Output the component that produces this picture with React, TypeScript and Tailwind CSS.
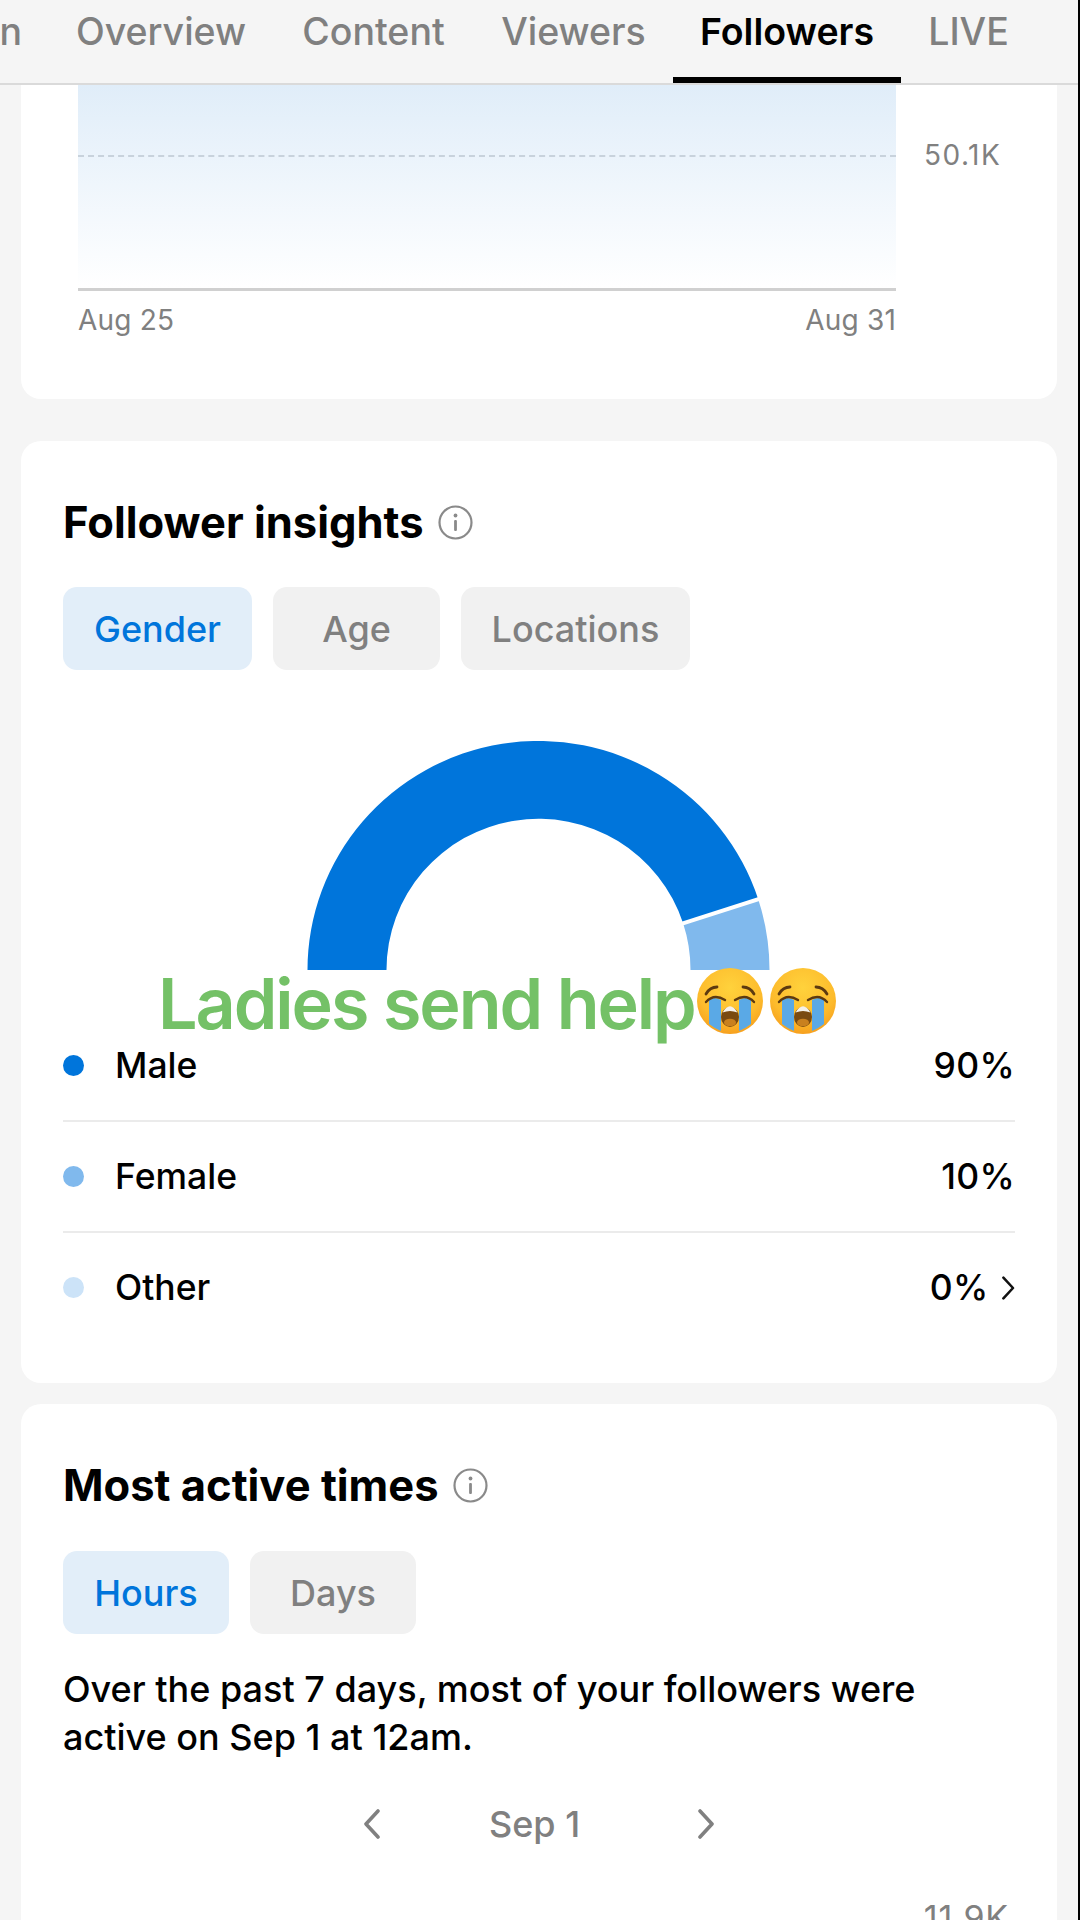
import React from "react";

const font = { fontFamily: '"Inter", "Liberation Sans", sans-serif' };

function InfoIcon() {
  return (
    <svg width="35" height="35" viewBox="0 0 35 35" fill="none" className="shrink-0">
      <circle cx="17.5" cy="17.5" r="16" stroke="#8a8a8a" strokeWidth="2.2" />
      <circle cx="17.5" cy="10.5" r="1.9" fill="#8a8a8a" />
      <rect x="16.1" y="15" width="2.8" height="11" rx="1" fill="#8a8a8a" />
    </svg>
  );
}

function Chevron({ dir, size = 30, color = "#808080", sw = 3.6 }: { dir: "left" | "right"; size?: number; color?: string; sw?: number }) {
  return (
    <svg width={size * 0.6} height={size} viewBox="0 0 18 30" fill="none" className="shrink-0">
      <path
        d={dir === "left" ? "M15 2 L3 15 L15 28" : "M3 2 L15 15 L3 28"}
        stroke={color}
        strokeWidth={sw}
        strokeLinecap="round"
        strokeLinejoin="round"
      />
    </svg>
  );
}

function CryEmoji({ id }: { id: string }) {
  return (
    <svg width="66" height="66" viewBox="0 0 66 66" className="shrink-0" role="img" aria-label="😭">
      <defs>
        <radialGradient id={id} cx="50%" cy="30%" r="75%">
          <stop offset="0%" stopColor="#FFD23C" />
          <stop offset="65%" stopColor="#FDBB2C" />
          <stop offset="100%" stopColor="#F59A1B" />
        </radialGradient>
      </defs>
      <circle cx="33" cy="33" r="33" fill={`url(#${id})`} />
      <path d="M12 32 Q17 28 24 32 L24 63 Q17 60 12 56 Z" fill="#5AA9E6" />
      <path d="M54 32 Q49 28 42 32 L42 63 Q49 60 54 56 Z" fill="#5AA9E6" />
      <path d="M9 34 Q17 25 28 32" stroke="#5d3a10" strokeWidth="2.4" fill="none" strokeLinecap="round" />
      <path d="M57 34 Q49 25 38 32" stroke="#5d3a10" strokeWidth="2.4" fill="none" strokeLinecap="round" />
      <path d="M9 26 Q13 19 20 19" stroke="#5d3a10" strokeWidth="2.8" fill="none" strokeLinecap="round" />
      <path d="M57 26 Q53 19 46 19" stroke="#5d3a10" strokeWidth="2.8" fill="none" strokeLinecap="round" />
      <ellipse cx="33" cy="49" rx="9" ry="10" fill="#7a4a10" />
      <path d="M25.5 44.5 Q33 32 40.5 44.5 Q33 41.5 25.5 44.5 Z" fill="#f4f1ea" />
      <ellipse cx="33" cy="54.5" rx="6" ry="3.8" fill="#C9801E" />
    </svg>
  );
}

function Pill({ label, active, w }: { label: string; active?: boolean; w: string }) {
  return (
    <div
      className={`${w} h-[83px] rounded-[14px] flex items-center justify-center text-[36px] font-medium ${
        active ? "bg-[#E2EEF9] text-[#0075DB]" : "bg-[#F1F1F1] text-[#808080]"
      }`}
    >
      {label}
    </div>
  );
}

function LegendRow({ color, label, value, chevron, border }: { color: string; label: string; value: string; chevron?: boolean; border?: boolean }) {
  return (
    <div className={`h-[109px] flex items-center box-content ${border ? "border-b-2 border-[#EBEBEB]" : ""}`}>
      <span className={`w-[21px] h-[21px] rounded-full ${color}`} />
      <span className="ml-[31px] text-[35.5px] font-medium text-black">{label}</span>
      <span className="ml-auto flex items-center text-[35.5px] font-medium text-black tracking-[0.3px]">
        {value}
        {chevron && (
          <span className="ml-[12px] flex">
            <Chevron dir="right" size={24} color="#111" sw={3.2} />
          </span>
        )}
      </span>
    </div>
  );
}

export default function App() {
  return (
    <div style={font} className="w-[1080px] h-[1920px] overflow-hidden bg-[#F5F5F5] border-r-2 border-black box-border">
      {/* Tabs */}
      <div className="h-[85px] border-b-2 border-[#DADADA] box-border flex text-[37.5px] font-medium text-[#808080]">
        <div className="w-[49px] overflow-hidden flex justify-end pr-[27px] pt-[9px] leading-[46px]">n</div>
        {[
          ["Overview", "w-[224px]"],
          ["Content", "w-[201px]"],
          ["Viewers", "w-[199px]"],
        ].map(([t, w]) => (
          <div key={t} className={`${w} flex justify-center pt-[9px] leading-[46px]`}>
            {t}
          </div>
        ))}
        <div className="w-[228px] h-[83px] box-border border-b-[6px] border-black flex justify-center pt-[9px] leading-[46px] font-semibold text-black">
          Followers
        </div>
        <div className="w-[135px] flex justify-center pt-[9px] leading-[46px]">LIVE</div>
      </div>

      {/* Chart card */}
      <div className="mx-[21px] h-[314px] bg-white rounded-b-[20px] pl-[57px]">
        <div className="flex">
          <div className="relative w-[818px] h-[203px] bg-gradient-to-b from-[#E0EDF9] to-[#FFFFFF] border-b-[3px] border-[#D0D0D0] box-content">
            <div className="absolute left-0 right-0 top-[70px] border-t-2 border-dashed border-[#C8D2DC]" />
          </div>
          <div className="ml-[28px] mt-[52px] text-[28px] leading-[36px] tracking-[1.5px] text-[#808080]">50.1K</div>
        </div>
        <div className="w-[818px] flex justify-between mt-[11px] text-[28px] leading-[36px] tracking-[0.2px] text-[#808080]">
          <span>Aug 25</span>
          <span>Aug 31</span>
        </div>
      </div>

      {/* Follower insights */}
      <div className="mx-[21px] mt-[42px] h-[942px] bg-white rounded-[20px] px-[42px] pt-[57px]">
        <div className="flex items-center gap-[14px] h-[48px]">
          <h2 className="text-[43.5px] font-bold text-black leading-[48px]">Follower insights</h2>
          <InfoIcon />
        </div>
        <div className="flex gap-[21px] mt-[41px]">
          <Pill label="Gender" active w="w-[189px]" />
          <Pill label="Age" w="w-[167px]" />
          <Pill label="Locations" w="w-[229px]" />
        </div>
        <div className="relative mt-[71px] h-[229px]">
          <svg width="463" height="229" viewBox="0 0 463 229" className="absolute left-[244px] top-0">
            <path d="M0.5 229 A231 229 0 0 1 451.2 158.2 L376.1 182.3 A152 151 0 0 0 79.5 229 Z" fill="#0075DB" />
            <path d="M451.2 158.2 A231 229 0 0 1 462.5 229 L383.5 229 A152 151 0 0 0 376.1 182.3 Z" fill="#80B9ED" />
            <path d="M372 183.7 L458 156" stroke="#fff" strokeWidth="4" />
          </svg>
          <div className="absolute left-[95px] top-[225px] flex items-start whitespace-nowrap">
            <span className="text-[70px] font-semibold leading-[76px] text-[#74C167] tracking-[-2.05px]">Ladies send help</span>
            <span className="absolute left-[539px] top-[2px] flex gap-[7px]">
              <CryEmoji id="e1" />
              <CryEmoji id="e2" />
            </span>
          </div>
        </div>
        <div className="mt-[41px]">
          <LegendRow color="bg-[#0075DB]" label="Male" value="90%" border />
          <LegendRow color="bg-[#80B9ED]" label="Female" value="10%" border />
          <LegendRow color="bg-[#CCE3F8]" label="Other" value="0%" chevron />
        </div>
      </div>

      {/* Most active */}
      <div className="mx-[21px] mt-[21px] h-[600px] bg-white rounded-[20px] px-[42px] pt-[57px]">
        <div className="flex items-center gap-[14px] h-[48px]">
          <h2 className="text-[43.5px] font-bold text-black leading-[48px]">Most active times</h2>
          <InfoIcon />
        </div>
        <div className="flex gap-[21px] mt-[42px]">
          <Pill label="Hours" active w="w-[166px]" />
          <Pill label="Days" w="w-[166px]" />
        </div>
        <p className="mt-[31px] text-[36px] font-medium leading-[48px] text-black">
          Over the past 7 days, most of your followers were
          <br />
          active on Sep 1 at 12am.
        </p>
        <div className="mt-[39px] h-[48px] flex items-center justify-center text-[36px] font-medium text-[#808080]">
          <Chevron dir="left" size={30} />
          <span className="ml-[108px] mr-[117px]">Sep 1</span>
          <Chevron dir="right" size={30} />
        </div>
        <div className="mt-[52px] text-right pr-[6px] text-[34px] leading-[36px] tracking-[0.8px] text-[#808080]">11.9K</div>
      </div>
    </div>
  );
}
